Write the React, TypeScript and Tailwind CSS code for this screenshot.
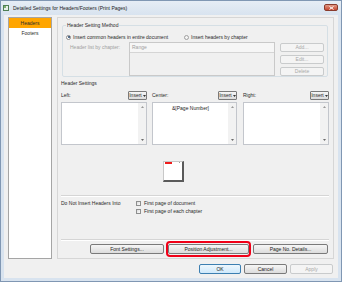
import React from 'react';

function Btn({ label, className = '', disabled = false }: { label: string; className?: string; disabled?: boolean }) {
  const look = disabled
    ? 'border-[#c9cbcc] bg-[#f4f4f4] text-[#a8a8a8]'
    : 'border-[#7a7a7a] bg-linear-to-b from-[#f6f6f6] to-[#dcdcdc] text-[#222]';
  return (
    <div className={`flex items-center justify-center border rounded-[2px] whitespace-nowrap ${look} ${className}`}>
      {label}
    </div>
  );
}

function InsertBtn() {
  return (
    <div className="w-[19px] h-[9px] flex items-center justify-center gap-[1px] border border-[#7a7a7a] rounded-[1px] bg-linear-to-b from-[#f6f6f6] to-[#dcdcdc]">
      <span>Insert</span>
      <svg width="3" height="2" viewBox="0 0 3 2">
        <path d="M0 0H3L1.5 2Z" fill="#333" />
      </svg>
    </div>
  );
}

function TextBox({ text }: { text?: string }) {
  return (
    <div className="mt-[2px] h-[43px] flex bg-white border border-[#c3c6cc]">
      <div className="flex-1 flex justify-center pt-[3px] text-[#222]">{text}</div>
      <div className="w-[8px] bg-[#f2f2f2] flex flex-col items-center justify-between py-[3px]">
        <svg width="3" height="2" viewBox="0 0 3 2">
          <path d="M0 2H3L1.5 0Z" fill="#9a9a9a" />
        </svg>
        <svg width="3" height="2" viewBox="0 0 3 2">
          <path d="M0 0H3L1.5 2Z" fill="#6a6a6a" />
        </svg>
      </div>
    </div>
  );
}

function Check({ label }: { label: string }) {
  return (
    <div className="h-[8px] flex items-center">
      <div className="w-[5px] h-[5px] border border-[#8e8f8f] bg-linear-to-br from-[#dcdcdc] to-[#fbfbfb]" />
      <span className="ml-[3px]">{label}</span>
    </div>
  );
}

export default function App() {
  return (
    <div className="w-[342px] h-[282px] overflow-hidden flex flex-col bg-[#d8e3ef] border border-[#8097b3] font-['Liberation_Sans',Arial,sans-serif] text-[5px] leading-none text-[#2a2a2a]">
      {/* title bar */}
      <div className="h-[14px] flex items-center pl-[2px] pr-[3px] bg-linear-to-b from-[#e6edf5] to-[#d8e3ef]">
        <svg width="6" height="6" viewBox="0 0 6 6">
          <rect x="0" y="0" width="6" height="6" fill="#4f7f55" />
          <rect x="1" y="1" width="4" height="4" fill="#e8efe9" />
          <rect x="1" y="1" width="2" height="2" fill="#7fae73" />
        </svg>
        <span className="ml-[4px] text-[#1b1b1b]">Detailed Settings for Headers/Footers (Print Pages)</span>
        <div className="ml-auto self-start mt-[3px] w-[14px] h-[7px] flex items-center justify-center rounded-[2px] border border-[#8a3b2c] bg-linear-to-b from-[#e29a86] to-[#c4452f]">
          <svg width="5" height="4" viewBox="0 0 5 4">
            <path d="M0.5 0.5L4.5 3.5M4.5 0.5L0.5 3.5" stroke="#fff" strokeWidth="1" />
          </svg>
        </div>
      </div>

      {/* client */}
      <div className="mx-[3px] mb-[3px] flex-1 flex flex-col bg-[#f0f0f0]">
        <div className="mt-[2px] mx-[4px] h-[242px] flex gap-[5px]">
          {/* sidebar */}
          <div className="w-[44px] bg-white border border-[#a5a5a5]">
            <div className="h-[10px] flex items-center justify-center bg-[#ffa500]">Headers</div>
            <div className="h-[10px] flex items-center justify-center">Footers</div>
          </div>

          {/* main panel */}
          <div className="w-[277px] border border-[#d6d6d6] pt-[3px] pl-[3px] pr-[4px] flex flex-col">
            <fieldset className="mx-[1px] border border-[#d5dfe5] rounded-[2px]">
              <legend className="ml-[3px] px-[1px] h-[8px] leading-[8px]">Header Setting Method</legend>
              <div className="mt-[4px] h-[8px] pl-[3px] flex items-center">
                <div className="w-[118px] flex items-center">
                  <div className="w-[5px] h-[5px] rounded-full border border-[#8a8a8a] bg-white flex items-center justify-center">
                    <div className="w-[2px] h-[2px] rounded-full bg-[#1e3f66]" />
                  </div>
                  <span className="ml-[2px]">Insert common headers in entire document</span>
                </div>
                <div className="w-[5px] h-[5px] rounded-full border border-[#a0a0a0] bg-[#f4f4f4]" />
                <span className="ml-[2px]">Insert headers by chapter</span>
              </div>
              <div className="mt-[1px] flex">
                <div className="w-[66px] pl-[7px] h-[11px] flex items-center text-[#a0a0a0]">Header list by chapter:</div>
                <div className="w-[146px] h-[34px] border border-[#c9c9c9] bg-[#f0f0f0]">
                  <div className="h-[10px] flex items-center pl-[2px] border-b border-[#d5d5d5] bg-[#f6f6f6] text-[#a0a0a0]">Range</div>
                </div>
                <div className="ml-[5px] pt-[1px] flex flex-col gap-[3px]">
                  <Btn label="Add..." disabled className="w-[44px] h-[9px]" />
                  <Btn label="Edit..." disabled className="w-[44px] h-[9px]" />
                  <Btn label="Delete" disabled className="w-[44px] h-[9px]" />
                </div>
              </div>
            </fieldset>

            <div className="mt-[2px] h-[8px] flex items-center">Header Settings</div>

            <div className="mt-[4px] flex">
              <div className="w-[86px] flex flex-col">
                <div className="h-[9px] flex items-center justify-between">
                  <span>Left:</span>
                  <InsertBtn />
                </div>
                <TextBox />
              </div>
              <div className="ml-[5px] w-[85px] flex flex-col">
                <div className="h-[9px] flex items-center justify-between">
                  <span>Center:</span>
                  <InsertBtn />
                </div>
                <TextBox text="&[Page Number]" />
              </div>
              <div className="ml-[6px] w-[86px] flex flex-col">
                <div className="h-[9px] flex items-center justify-between">
                  <span>Right:</span>
                  <InsertBtn />
                </div>
                <TextBox />
              </div>
            </div>

            {/* page preview */}
            <div className="h-[50px] pt-[16px] pl-[102px]">
              <div className="w-[21px] h-[21px] bg-white border-l border-t border-[#c8c8c8] border-r-2 border-b-2 border-r-[#5a5a5a] border-b-[#5a5a5a] flex items-start justify-between pl-[1px] pr-[2px]">
                <div className="w-[7px] h-[2px] bg-[#ee1c1c]" />
                <div className="w-[1px] h-[1px] bg-[#9a9a9a]" />
              </div>
            </div>

            <div className="h-[2px] border-t border-[#d5d5d5] border-b border-b-white" />

            <div className="mt-[2px] flex">
              <div className="w-[75px] h-[8px] flex items-center">Do Not Insert Headers Into</div>
              <div className="flex flex-col">
                <Check label="First page of document" />
                <Check label="First page of each chapter" />
              </div>
            </div>

            <div className="mt-[24px] h-[2px] border-t border-[#d5d5d5] border-b border-b-white" />

            <div className="h-[16px] pl-[29px] flex items-center">
              <Btn label="Font Settings..." className="w-[74px] h-[10px]" />
              <div className="ml-[2px] border-2 border-[#f00018] rounded-[4px] py-[1px]">
                <Btn label="Position Adjustment..." className="w-[81px] h-[10px]" />
              </div>
              <Btn label="Page No. Details..." className="ml-[2px] w-[75px] h-[10px]" />
            </div>
          </div>
        </div>

        {/* dialog buttons */}
        <div className="mt-[5px] h-[10px] pr-[5px] flex justify-end gap-[3px]">
          <div className="w-[42px] flex items-center justify-center border border-[#3c7fb1] rounded-[2px] bg-linear-to-b from-[#eef7fd] to-[#cfe9fb] text-[#222]">OK</div>
          <Btn label="Cancel" className="w-[43px]" />
          <Btn label="Apply" disabled className="w-[43px]" />
        </div>
      </div>
    </div>
  );
}
